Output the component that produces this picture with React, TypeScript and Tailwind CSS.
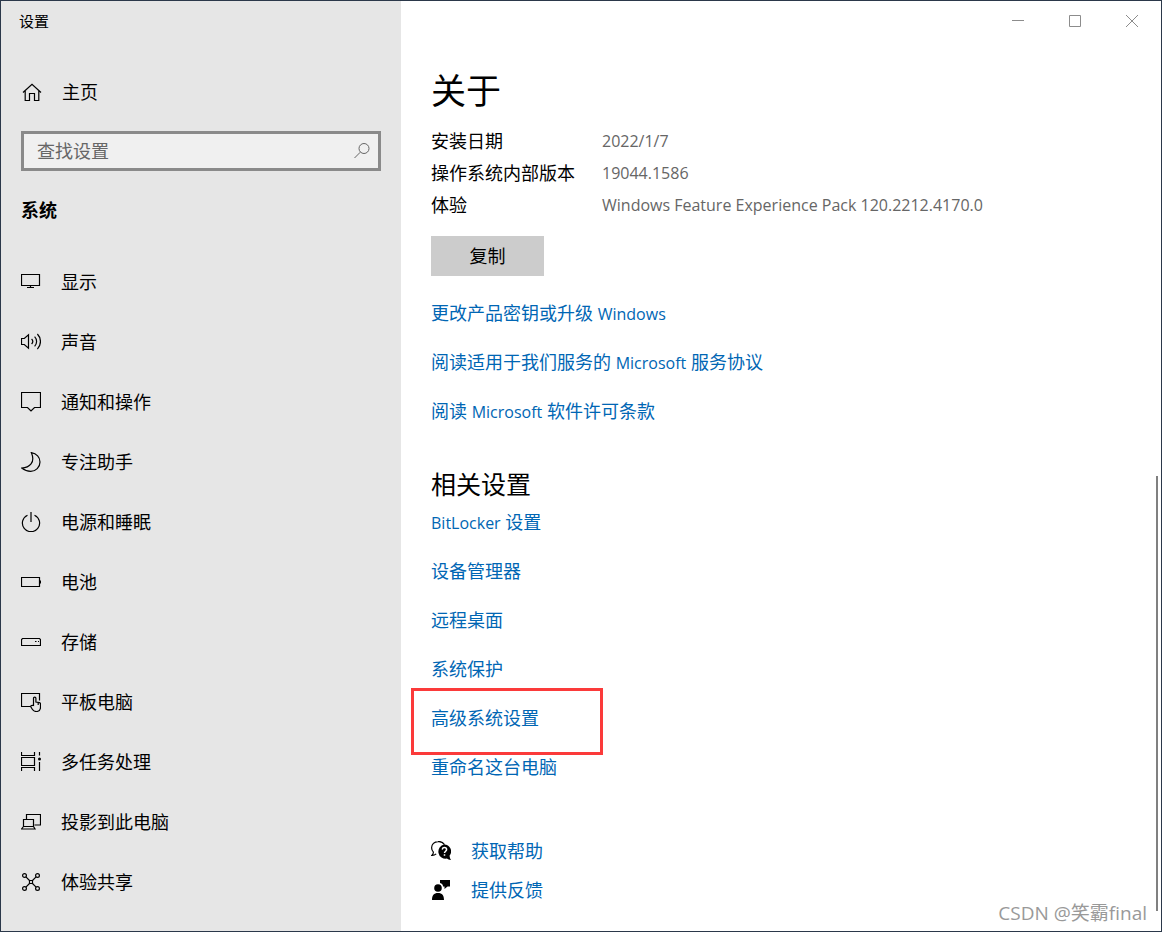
import type { ReactNode } from 'react';

const SIDEBAR_ITEMS: { label: string; icon: ReactNode }[] = [
  {
    label: '显示',
    icon: <path d="M.5 2.5h18v11H.5zM9.5 13.5v2M6 15.5h7" />,
  },
  {
    label: '声音',
    icon: (
      <path d="M.5 6.5h2.8l4.2-3.7v13.4l-4.2-3.7H.5zM10.6 7a3.6 3.6 0 0 1 0 5M13.6 4.6a7 7 0 0 1 0 9.8M16.4 2a11 11 0 0 1 0 15.2" />
    ),
  },
  {
    label: '通知和操作',
    icon: <path d="M.5.5h19v15h-6L10 19l-3.5-3.5h-6z" />,
  },
  {
    label: '专注助手',
    icon: <path d="M10.4.7c5.200.9 8.600 4.700 8.600 9.300 0 5.200-4.200 9.300-9.300 9.300-3.800 0-7-1.700-9-3.300C8.500 15.800 14.600 10.500 10.400.7z" />,
  },
  {
    label: '电源和睡眠',
    icon: <path d="M10 0v10M6.5 3.2a8.6 8.6 0 1 0 7 0" />,
  },
  {
    label: '电池',
    icon: <path d="M.5 5.5h18v9H.5zM19.5 8.5v3" />,
  },
  {
    label: '存储',
    icon: <path d="M1.5 6.5h17l1 1v6H.5v-6zM14 9.5h1.5M17 9.5h1.2" />,
  },
  {
    label: '平板电脑',
    icon: (
      <>
        <path d="M9 14.5H.5v-13h18v7" />
        <path d="M12.5 13V6.300a1.200 1.200 0 0 1 2.400 0V10l3.600.6c.7.200 1 .6 1 1.200v3.500c0 2.500-1.700 4.200-4.200 4.200-2 0-3.200-.8-4-2.200l-1.800-3c.8-1 1.800-1 3-.8zM17.200 10.500V13" />
      </>
    ),
  },
  {
    label: '多任务处理',
    icon: (
      <>
        <path d="M.5 0v3.5h13V0M.5 5.5h13v8H.5zM.5 19v-3.5h13V19M18.5 0v3.5M18.5 10v9" />
        <circle cx="18.5" cy="7" r="1.5" fill="currentColor" stroke="none" />
      </>
    ),
  },
  {
    label: '投影到此电脑',
    icon: <path d="M5.5 7V2.5h14V13h-6M2.5 7.5h10v7h-10zM2.5 14.500l-2 2.500H14l-1.500-2.500" />,
  },
  {
    label: '体验共享',
    icon: (
      <>
        <path d="M8.5 8.5h3v3h-3zM4.9 4.9l3.6 3.6M15.1 4.9l-3.6 3.6M4.9 15.1l3.6-3.6M15.1 15.1l-3.6-3.6" />
        <circle cx="3.5" cy="3.5" r="1.9" />
        <circle cx="16.5" cy="3.5" r="1.9" />
        <circle cx="3.5" cy="16.5" r="1.9" />
        <circle cx="16.5" cy="16.5" r="1.9" />
      </>
    ),
  },
];

const SPECS = [
  { name: '安装日期', value: '2022/1/7' },
  { name: '操作系统内部版本', value: '19044.1586' },
  { name: '体验', value: 'Windows Feature Experience Pack 120.2212.4170.0' },
];

// Latin words are kept apart, they are set a little smaller than the Chinese text
const LICENSE_LINKS: ReactNode[] = [
  <>更改产品密钥或升级 <Latin>Windows</Latin></>,
  <>阅读适用于我们服务的 <Latin>Microsoft</Latin> 服务协议</>,
  <>阅读 <Latin>Microsoft</Latin> 软件许可条款</>,
];

const RELATED_LINKS: { content: ReactNode; highlighted?: boolean }[] = [
  { content: <><Latin>BitLocker</Latin> 设置</> },
  { content: '设备管理器' },
  { content: '远程桌面' },
  { content: '系统保护' },
  { content: '高级系统设置', highlighted: true },
  { content: '重命名这台电脑' },
];

function Latin({ children }: { children: ReactNode }) {
  return <span className="text-[16px] leading-none">{children}</span>;
}

function Icon({ children }: { children: ReactNode }) {
  return (
    <svg viewBox="0 0 20 20" fill="none" stroke="currentColor" strokeWidth="1.2" className="size-5 shrink-0" aria-hidden="true">
      {children}
    </svg>
  );
}

function SettingsLink({ children, highlighted }: { children: ReactNode; highlighted?: boolean }) {
  return (
    <li className="flex h-[49px] items-center">
      <a href="#" className="relative text-[#0066b4] hover:text-gray-500">
        {children}
        {highlighted && (
          <span className="pointer-events-none absolute -left-5 -top-[18px] h-[67px] w-48 border-3 border-[#fb3a3a]" />
        )}
      </a>
    </li>
  );
}

function Sidebar() {
  return (
    <aside className="w-100 shrink-0 bg-[#e6e6e6] pb-4">
      <div className="flex h-10 items-center pl-[18px] text-[15px]">设置</div>

      <a href="#" className="mt-[31px] flex h-10 items-center gap-5 pl-[21px]">
        <Icon>
          <path d="M1 10.5l9-8.300 9 8.300M3.200 8.700v9.800h4.300v-7h5v7h4.300V8.700" />
        </Icon>
        主页
      </a>

      <div className="mx-5 mt-[19px] flex h-10 items-center border-3 border-[#8a8a8a] bg-[#f0f0f0] pl-[13px] pr-2">
        <input
          type="text"
          aria-label="查找设置"
          placeholder="查找设置"
          className="min-w-0 flex-1 bg-transparent outline-none placeholder:text-[#666]"
        />
        <button type="button" aria-label="搜索" className="text-[#666]">
          <svg viewBox="0 0 16 16" fill="none" stroke="currentColor" className="size-4">
            <circle cx="10" cy="5.5" r="5" />
            <path d="M6.3 9.2L.5 15" />
          </svg>
        </button>
      </div>

      <h2 className="mt-[27px] pl-5 font-bold">系统</h2>

      <nav className="mt-[30px]">
        {SIDEBAR_ITEMS.map((item) => (
          <a key={item.label} href="#" className="flex h-15 items-center gap-5 pl-5 hover:bg-black/5">
            <Icon>{item.icon}</Icon>
            {item.label}
          </a>
        ))}
      </nav>
    </aside>
  );
}

function WindowControls() {
  return (
    <div className="flex h-10 justify-end pr-px text-[#8c8c8c]">
      <button type="button" aria-label="最小化" className="flex w-[57px] items-center justify-center">
        <svg viewBox="0 0 12 12" stroke="currentColor" className="size-3">
          <path d="M0 5.5h12" />
        </svg>
      </button>
      <button type="button" aria-label="最大化" className="flex w-[57px] items-center justify-center">
        <svg viewBox="0 0 12 12" fill="none" stroke="currentColor" className="size-3">
          <path d="M.5.5h11v11H.5z" />
        </svg>
      </button>
      <button type="button" aria-label="关闭" className="flex w-[57px] items-center justify-center">
        <svg viewBox="0 0 12 12" stroke="currentColor" className="size-3">
          <path d="M0 0l12 12M12 0L0 12" />
        </svg>
      </button>
    </div>
  );
}

export default function App() {
  return (
    <div className="relative flex min-h-screen border border-[#2b384a] bg-white font-['Open_Sans','Noto_Sans_CJK_SC',sans-serif] text-[18px] leading-6 text-black">
      <Sidebar />

      <div className="min-w-0 flex-1">
        <WindowControls />

        <main className="pl-[30px] pr-10">
          <h1 className="mt-[25px] text-[35px] leading-[50px]">关于</h1>

          <dl className="mt-[9px]">
            {SPECS.map((spec) => (
              <div key={spec.name} className="flex h-8 items-center">
                <dt className="w-[171px] shrink-0">{spec.name}</dt>
                <dd className="text-[16px] text-[#666]">{spec.value}</dd>
              </div>
            ))}
          </dl>

          <button type="button" className="mt-[15px] h-10 w-[113px] bg-[#ccc] hover:bg-[#bbb]">
            复制
          </button>

          <ul className="mt-3">
            {LICENSE_LINKS.map((content, i) => (
              <SettingsLink key={i}>{content}</SettingsLink>
            ))}
          </ul>

          <h2 className="mt-[33px] text-[25px] leading-8">相关设置</h2>
          <ul className="-mt-[3px]">
            {RELATED_LINKS.map((link, i) => (
              <SettingsLink key={i} highlighted={link.highlighted}>{link.content}</SettingsLink>
            ))}
          </ul>

          <div className="mt-10 flex flex-col">
            <a href="#" className="flex h-10 items-center gap-5 text-[#0066b4]">
              <svg viewBox="0 0 20 20" className="size-5 text-black" aria-hidden="true">
                <path
                  d="M13.500 3.600A6.800 6.800 0 0 0 7 .6C3.300.6.600 3.300.600 6.800c0 1.900.7 3.300 1.800 4.400-.1 1.300-.6 2.300-1.600 3.200 1.800.1 3.200-.4 4.400-1.500"
                  fill="none"
                  stroke="currentColor"
                  strokeWidth="1.2"
                />
                <path
                  d="M13.200 3.500a6.800 6.800 0 0 1 5.400 11c.1 1.800.5 3.200 1.400 4.500-1.600.1-3-.4-4.100-1.400A6.900 6.900 0 1 1 13.200 3.500z"
                  fill="currentColor"
                />
                <path
                  d="M11.200 8.500c.3-1.300 1.200-1.900 2.200-1.900 1.300 0 2.200.8 2.200 1.900 0 1.600-2.100 1.800-2.100 3.500M13.500 13.200v1.600"
                  fill="none"
                  stroke="white"
                  strokeWidth="1.5"
                />
              </svg>
              获取帮助
            </a>
            <a href="#" className="flex h-[38px] items-center gap-5 text-[#0066b4]">
              <svg viewBox="0 0 20 20" fill="currentColor" className="size-5 text-black" aria-hidden="true">
                <circle cx="7" cy="8" r="3.8" />
                <path d="M1 20c0-4.500 1.800-7 6-7s6 2.500 6 7zM9 0h10v6.500h-2.500L13.500 9V6.500H12C12 5 11 3.300 9 3z" />
              </svg>
              提供反馈
            </a>
          </div>
        </main>
      </div>

      {/* Scroll thumb */}
      <div className="absolute bottom-5 right-[3px] top-[475px] w-0.5 bg-[#808080]" />

      <div className="absolute bottom-1 right-3.5 text-[19px] leading-7 text-[#999]">CSDN @笑霸final</div>
    </div>
  );
}
